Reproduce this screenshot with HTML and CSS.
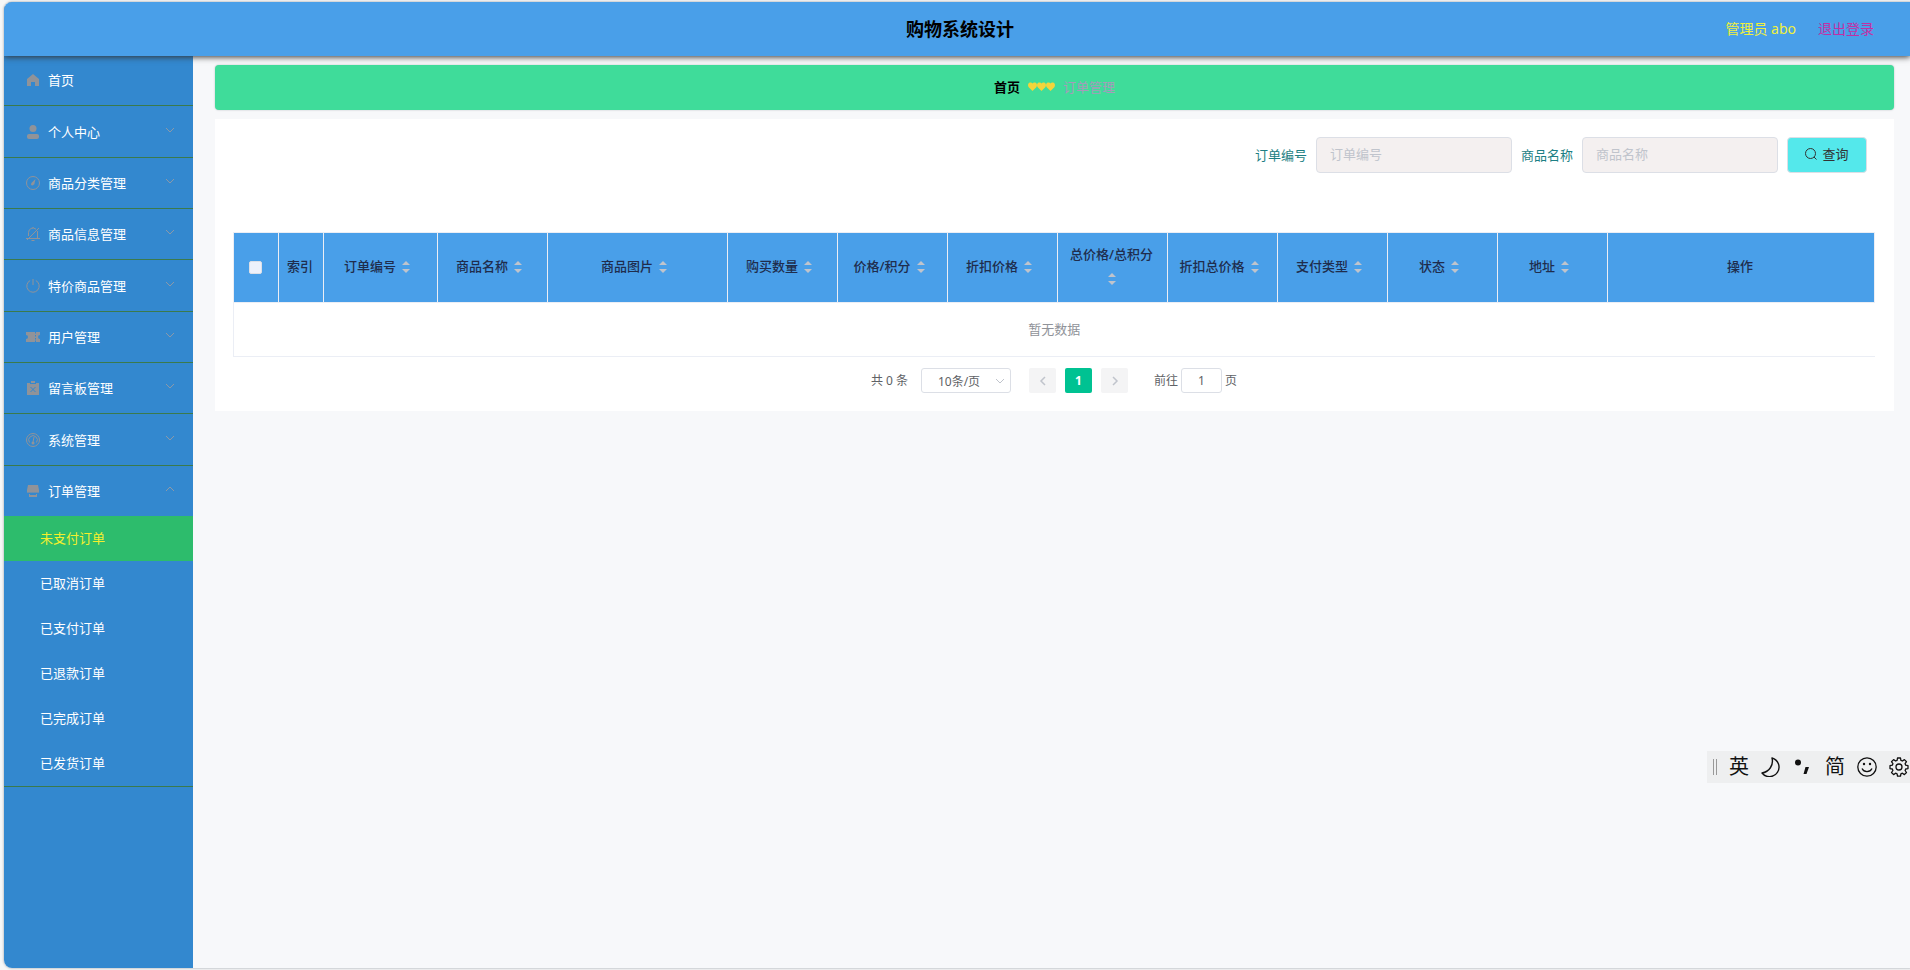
FILE: index.html
```html
<!DOCTYPE html>
<html lang="zh-CN">
<head>
<meta charset="utf-8">
<title>购物系统设计</title>
<link rel="stylesheet" href="styles.css">
</head>
<body>
<svg class="sprite" aria-hidden="true">
  <symbol id="down" viewBox="0 0 10 10"><path d="M1 3l4 4 4-4" fill="none" stroke="currentColor"/></symbol>
  <symbol id="up" viewBox="0 0 10 10"><path d="M1 7l4-4 4 4" fill="none" stroke="currentColor"/></symbol>
  <symbol id="sort" viewBox="0 0 8 12"><path d="M0 4l4-4 4 4zM0 8h8l-4 4z" fill="currentColor"/></symbol>
  <symbol id="heart" viewBox="0 0 9 9"><path d="M4.500 9L.7 5.200C-.5 3.800 0 1.200 1.700.6c1.200-.4 2.300 0 2.800.9.500-.9 1.600-1.300 2.800-.9C9 1.200 9.500 3.800 8.300 5.200z" fill="currentColor"/></symbol>
</svg>
<div class="app">
  <header class="topbar">
    <h1 class="topbar-title">购物系统设计</h1>
    <div class="topbar-user">
      <span class="user-name">管理员 abo</span>
      <a class="logout" href="#">退出登录</a>
    </div>
  </header>
  <div class="body">
    <nav class="sidebar">
      <ul class="menu">
        <li class="menu-item"><a class="menu-link" href="#"><svg class="menu-icon" viewBox="0 0 14 14"><path d="M7 1l6 5v7H9V9H5v4H1V6z" fill="currentColor"/></svg><span class="menu-text">首页</span></a></li>
        <li class="menu-item"><a class="menu-link" href="#"><svg class="menu-icon" viewBox="0 0 14 14"><circle cx="7" cy="3.500" r="3.500" fill="currentColor"/><rect x="1" y="9" width="12" height="5" rx="2" fill="currentColor"/></svg><span class="menu-text">个人中心</span><svg class="menu-arrow"><use href="#down"/></svg></a></li>
        <li class="menu-item"><a class="menu-link" href="#"><svg class="menu-icon" viewBox="0 0 14 14"><circle cx="7" cy="7" r="6.500" fill="none" stroke="currentColor"/><path d="M9.500 3L8.300 8.200 6.500 9.500 5 9l.4-2z" fill="currentColor"/></svg><span class="menu-text">商品分类管理</span><svg class="menu-arrow"><use href="#down"/></svg></a></li>
        <li class="menu-item"><a class="menu-link" href="#"><svg class="menu-icon" viewBox="0 0 14 14"><path d="M2.500 9V5.500a4.500 4.500 0 0 1 7.500-3.300M11.500 4v7.500H4.500M0 11.500h14M1 13L13 1M5.500 13.500h3M7 0v1" fill="none" stroke="currentColor"/></svg><span class="menu-text">商品信息管理</span><svg class="menu-arrow"><use href="#down"/></svg></a></li>
        <li class="menu-item"><a class="menu-link" href="#"><svg class="menu-icon" viewBox="0 0 14 14"><path d="M7 0v6M4.200 1.500a6.200 6.200 0 1 0 5.600 0" fill="none" stroke="currentColor"/></svg><span class="menu-text">特价商品管理</span><svg class="menu-arrow"><use href="#down"/></svg></a></li>
        <li class="menu-item"><a class="menu-link" href="#"><svg class="menu-icon" viewBox="0 0 14 14"><path d="M0 2h9v1.500h1V2h4v3a2 2 0 0 0 0 4v3h-4v-1.500H9V12H0V9a2 2 0 0 0 0-4zM9 5v1.500h1V5zM9 8v1.500h1V8z" fill="currentColor" fill-rule="evenodd"/></svg><span class="menu-text">用户管理</span><svg class="menu-arrow"><use href="#down"/></svg></a></li>
        <li class="menu-item"><a class="menu-link" href="#"><svg class="menu-icon" viewBox="0 0 14 14"><path d="M1 2h3v1h6V2h3v12H1zM5 0h4v2H5z" fill="currentColor"/><path d="M4.500 6l5 5M9.500 6l-5 5" stroke="#3388cf" fill="none"/></svg><span class="menu-text">留言板管理</span><svg class="menu-arrow"><use href="#down"/></svg></a></li>
        <li class="menu-item"><a class="menu-link" href="#"><svg class="menu-icon" viewBox="0 0 14 14"><circle cx="7" cy="7" r="6.500" fill="none" stroke="currentColor"/><path d="M3.500 9.500a4.300 4.300 0 1 1 7 0M8 4L7 9" fill="none" stroke="currentColor"/><circle cx="7" cy="10" r="1.500" fill="currentColor"/></svg><span class="menu-text">系统管理</span><svg class="menu-arrow"><use href="#down"/></svg></a></li>
        <li class="menu-item"><a class="menu-link" href="#"><svg class="menu-icon" viewBox="0 0 14 14"><path d="M2 1h10l1 5v2q-1 2-2 0-1 2-2 0-1 2-2 0-1 2-2 0-1 2-2 0-1 2-2 0V6zM3 10h1v1h6v-1h1v3H3z" fill="currentColor"/></svg><span class="menu-text">订单管理</span><svg class="menu-arrow"><use href="#up"/></svg></a>
          <ul class="submenu">
            <li><a class="submenu-link active" href="#">未支付订单</a></li>
            <li><a class="submenu-link" href="#">已取消订单</a></li>
            <li><a class="submenu-link" href="#">已支付订单</a></li>
            <li><a class="submenu-link" href="#">已退款订单</a></li>
            <li><a class="submenu-link" href="#">已完成订单</a></li>
            <li><a class="submenu-link" href="#">已发货订单</a></li>
          </ul>
        </li>
      </ul>
    </nav>
    <main class="main">
      <div class="breadcrumb">
        <a class="crumb-home" href="#">首页</a>
        <span class="hearts"><svg class="heart"><use href="#heart"/></svg><svg class="heart"><use href="#heart"/></svg><svg class="heart"><use href="#heart"/></svg></span>
        <span class="crumb-current">订单管理</span>
      </div>
      <section class="card">
        <form class="search">
          <label class="search-label" for="order-no">订单编号</label>
          <input class="search-input" id="order-no" type="text" placeholder="订单编号">
          <label class="search-label" for="goods-name">商品名称</label>
          <input class="search-input" id="goods-name" type="text" placeholder="商品名称">
          <button class="search-button" type="button"><svg class="search-icon" viewBox="0 0 12 12"><circle cx="5.500" cy="5.500" r="5" fill="none" stroke="currentColor"/><path d="M9 9l2.500 2.500" stroke="currentColor"/></svg>查询</button>
        </form>
        <table class="grid">
          <colgroup><col class="c-mini"><col class="c-mini"><col class="c-order"><col class="c-std"><col class="c-photo"><col class="c-std"><col class="c-std"><col class="c-std"><col class="c-std"><col class="c-std"><col class="c-std"><col class="c-std"><col class="c-std"><col></colgroup>
          <thead>
            <tr>
              <th><input class="check" type="checkbox" aria-label="全选"></th>
              <th>索引</th>
              <th>订单编号<svg class="sort"><use href="#sort"/></svg></th>
              <th>商品名称<svg class="sort"><use href="#sort"/></svg></th>
              <th>商品图片<svg class="sort"><use href="#sort"/></svg></th>
              <th>购买数量<svg class="sort"><use href="#sort"/></svg></th>
              <th>价格/积分<svg class="sort"><use href="#sort"/></svg></th>
              <th>折扣价格<svg class="sort"><use href="#sort"/></svg></th>
              <th>总价格/总积分 <svg class="sort"><use href="#sort"/></svg></th>
              <th>折扣总价格<svg class="sort"><use href="#sort"/></svg></th>
              <th>支付类型<svg class="sort"><use href="#sort"/></svg></th>
              <th>状态<svg class="sort"><use href="#sort"/></svg></th>
              <th>地址<svg class="sort"><use href="#sort"/></svg></th>
              <th>操作</th>
            </tr>
          </thead>
          <tbody><tr><td class="empty" colspan="14">暂无数据</td></tr></tbody>
        </table>
        <div class="pager">
          <span class="total">共 0 条</span>
          <span class="size-wrap"><select class="size" aria-label="每页条数"><option>10条/页</option></select><svg class="size-arrow"><use href="#down"/></svg></span>
          <div class="pages">
            <button class="page" type="button" aria-label="上一页"><svg class="page-icon" viewBox="0 0 10 10"><path d="M7 1L3 5l4 4" fill="none" stroke="currentColor" stroke-width="1.500"/></svg></button>
            <button class="page current" type="button">1</button>
            <button class="page" type="button" aria-label="下一页"><svg class="page-icon" viewBox="0 0 10 10"><path d="M3 1l4 4-4 4" fill="none" stroke="currentColor" stroke-width="1.500"/></svg></button>
          </div>
          <div class="jump"><label for="goto">前往</label><input class="jump-input" id="goto" type="text" value="1"><span>页</span></div>
        </div>
      </section>
    </main>
  </div>
</div>
<div class="ime">
  <span class="grip"></span>
  <span>英</span>
  <svg class="ime-icon" viewBox="0 0 20 20"><path d="M11 1a9.500 9.500 0 1 1-10 15A12 12 0 0 0 11 1z" fill="none" stroke="currentColor" stroke-width="1.400" stroke-linejoin="round"/></svg>
  <svg class="ime-icon" viewBox="0 0 20 20"><circle cx="5" cy="5.500" r="3" fill="currentColor"/><path d="M12.500 10h3.500l-2.500 7h-3z" fill="currentColor"/></svg>
  <span>简</span>
  <svg class="ime-icon" viewBox="0 0 20 20"><g fill="none" stroke="currentColor" stroke-width="1.300"><circle cx="10" cy="10" r="9.200"/><path d="M5 11.500a5.500 5.500 0 0 0 10 0"/></g><circle cx="7" cy="7" r="1.200" fill="currentColor"/><circle cx="13" cy="7" r="1.200" fill="currentColor"/></svg>
  <svg class="ime-icon" viewBox="0 0 20 20"><g fill="none" stroke="currentColor" stroke-width="1.300" stroke-linejoin="round"><circle cx="10" cy="10" r="3"/><path d="M8.500 1h3l.4 2.400 1.500.6 2-1.400 2.100 2.100-1.400 2 .6 1.500 2.300.4v3l-2.300.4-.6 1.500 1.400 2-2.100 2.100-2-1.400-1.500.6-.4 2.300h-3l-.4-2.300-1.500-.6-2 1.400-2.100-2.100 1.400-2-.6-1.500L1 11.600v-3l2.300-.4.600-1.500-1.400-2 2.100-2.100 2 1.400 1.500-.6z"/></g></svg>
</div>
</body>
</html>
```
FILE: styles.css
```css
* { box-sizing: border-box; }
body {
  margin: 0;
  height: 100vh;
  padding: 2px 0 2px 4px;
  background: #f7f7f7;
  font-family: "Noto Sans", "Noto Sans CJK SC", sans-serif;
  font-size: 13px;
  line-height: 20px;
  overflow: hidden;
}
ul { margin: 0; padding: 0; list-style: none; }
a { text-decoration: none; }
input, button, select { font: inherit; margin: 0; }
.sprite { position: absolute; width: 0; height: 0; }

.app {
  display: flex;
  flex-direction: column;
  height: 100%;
  overflow: hidden;
  border-radius: 8px 0 0 8px;
  background: #f7f8fa;
  box-shadow: 0 0 2px 1px #c8ccd0;
}
.topbar {
  position: relative;
  z-index: 2;
  display: flex;
  flex: none;
  align-items: center;
  justify-content: center;
  height: 54px;
  padding-left: 6px;
  background: #499fe9;
  box-shadow: 0 1px 6px #333;
}
.topbar-title { margin: 0; font-size: 18px; font-weight: 700; color: #000; }
.topbar-user {
  position: absolute;
  right: 36px;
  display: flex;
  gap: 22px;
  font-size: 14px;
}
.user-name { color: #f0f03c; }
.logout { color: #c22fa4; }
.body { display: flex; flex: 1; min-height: 0; }

.sidebar { flex: none; width: 189px; background: #3388cf; }
.menu { margin-top: -1px; }
.menu-item { border-bottom: 1px solid #3b7a4c; }
.menu-link {
  display: flex;
  align-items: center;
  height: 50px;
  padding: 0 18px 0 22px;
  color: #fff;
}
.menu-item:nth-child(3n+2) .menu-link { height: 51px; }
.menu-icon { width: 14px; height: 14px; margin-right: 8px; color: #909399; }
.menu-text { flex: 1; }
.menu-arrow { width: 10px; height: 10px; margin-bottom: 4px; color: #8c99a8; }
.submenu-link { display: block; height: 45px; padding-left: 36px; line-height: 44px; color: #fff; }
.submenu-link.active { background: #2dbc6c; color: #f5f02c; }

.main { flex: 1; min-width: 0; padding: 9px 16px 0 22px; }
.breadcrumb {
  display: flex;
  align-items: center;
  justify-content: center;
  gap: 8px;
  height: 45px;
  padding-bottom: 2px;
  border-radius: 4px;
  background: #3fdc9a;
  box-shadow: 0 0 2px #b8bcc2;
}
.crumb-home { font-weight: 700; color: #000; }
.hearts { display: flex; color: #f3d53a; }
.heart { width: 9px; height: 9px; }
.crumb-current { color: #a59bbb; }

.card { margin-top: 9px; padding: 18px 19px 18px 18px; background: #fff; }
.search {
  display: flex;
  align-items: center;
  justify-content: flex-end;
  gap: 9px;
  padding-right: 8px;
}
.search-label { color: #1d7f84; }
.search-input {
  width: 196px;
  height: 36px;
  padding: 0 13px 2px;
  border: 1px solid #dcdfe6;
  border-radius: 4px;
  background: #f4f0f0;
  color: #606266;
}
.search-input::placeholder { color: #c0c4cc; }
.search-button {
  display: flex;
  align-items: center;
  justify-content: center;
  gap: 5px;
  width: 80px;
  height: 36px;
  padding: 0 0 2px;
  border: 1px solid #dcdfe6;
  border-radius: 4px;
  background: #54e8eb;
  color: #333;
}
.search-icon { width: 12px; height: 12px; }

.grid {
  width: 100%;
  margin-top: 59px;
  border-collapse: collapse;
  table-layout: fixed;
  text-align: center;
}
.c-mini { width: 45px; }
.c-order { width: 114px; }
.c-std { width: 110px; }
.c-photo { width: 180px; }
.grid th {
  height: 70px;
  padding: 0 10px 4px 8px;
  border: 1px solid #ebeef5;
  background: #499fe9;
  color: #1f2d4d;
  font-weight: 500;
  line-height: 24px;
}
.grid th:nth-child(-n+2) { padding: 0 2px 4px 0; }
.check {
  appearance: none;
  width: 13px;
  height: 13px;
  border: 1px solid #dcdfe6;
  border-radius: 2px;
  background: #edf1fb;
  vertical-align: middle;
}
.sort { width: 8px; height: 12px; margin: 0 5px 0 6px; vertical-align: middle; color: #c0c4cc; }
.empty { height: 54px; padding: 0 0 2px; border: 1px solid #ebeef5; border-right: 0; color: #909399; }

.pager {
  display: flex;
  align-items: center;
  justify-content: center;
  margin-top: 11px;
  color: #606266;
  font-size: 12px;
  line-height: 25px;
}
.size-wrap { position: relative; margin: 0 18px 0 13px; }
.size {
  display: block;
  appearance: none;
  width: 90px;
  height: 25px;
  padding: 0 14px 0 0;
  border: 1px solid #dcdfe6;
  border-radius: 3px;
  background: #fff;
  color: #606266;
  text-align: center;
  text-align-last: center;
}
.size-arrow { position: absolute; right: 6px; top: 8px; width: 10px; height: 10px; color: #c0c4cc; pointer-events: none; }
.pages { display: flex; gap: 9px; }
.page {
  display: flex;
  align-items: center;
  justify-content: center;
  width: 27px;
  height: 25px;
  padding: 0;
  border: 0;
  border-radius: 2px;
  background: #f4f4f5;
  color: #c0c4cc;
}
.page.current { background: #00c292; color: #fff; font-weight: 700; }
.page-icon { width: 10px; height: 10px; }
.jump { display: flex; align-items: center; gap: 3px; margin-left: 26px; }
.jump-input {
  width: 41px;
  height: 25px;
  padding: 0;
  border: 1px solid #dcdfe6;
  border-radius: 3px;
  background: #fff;
  color: #606266;
  text-align: center;
}

.ime {
  position: fixed;
  right: 0;
  top: 751px;
  z-index: 5;
  display: flex;
  align-items: center;
  gap: 12px;
  height: 32px;
  padding: 0 1px 0 6px;
  background: #eeeff0;
  color: #111;
  font-size: 20px;
  line-height: 32px;
}
.grip { width: 4px; height: 16px; border: solid #999; border-width: 0 1px; }
.ime-icon { width: 20px; height: 20px; }
```
